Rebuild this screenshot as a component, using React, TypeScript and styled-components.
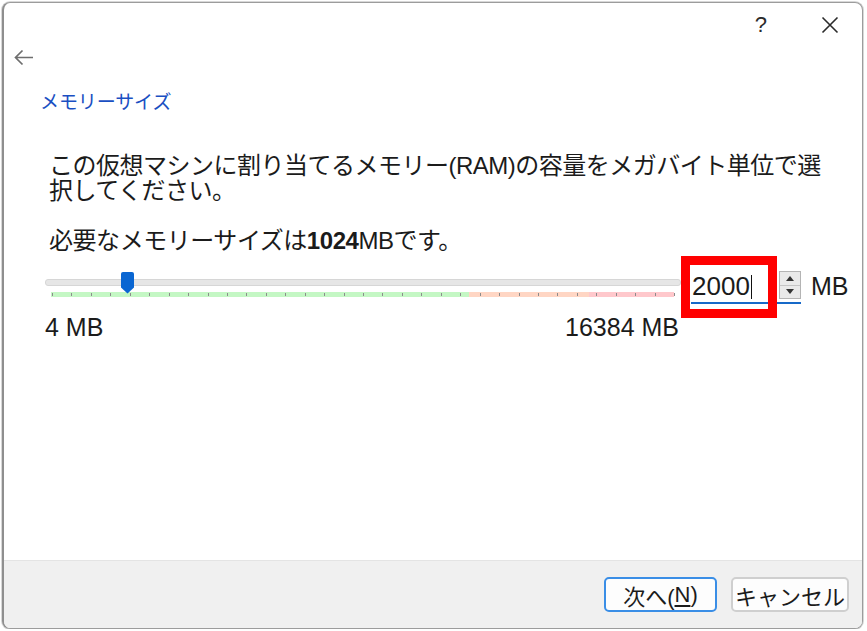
import * as React from 'react';
import styled, { createGlobalStyle } from 'styled-components';

const GlobalStyle = createGlobalStyle`
  html, body {
    margin: 0;
    padding: 0;
    background: #ffffff;
  }
  body {
    font-family: "Liberation Sans", "Noto Sans CJK JP", sans-serif;
    color: #1b1b1b;
  }
`;

const TICK_COUNT = 33;
const MIN = 4;
const MAX = 16384;
const VALUE = 2000;
const TRACK_WIDTH = 636;

export default function App() {
  const handleLeft = 6 + ((VALUE - MIN) / (MAX - MIN)) * (TRACK_WIDTH - 13) - 6;

  return (
    <>
      <GlobalStyle />
      <Dialog>
        <TitleBar>
          <HelpButton>?</HelpButton>
          <CloseButton>
            <svg width='18' height='18' viewBox='0 0 18 18'>
              <path d='M1.5 1.5 L16.5 16.5 M16.5 1.5 L1.5 16.5' stroke='#2b2b2b' strokeWidth='1.6' fill='none' />
            </svg>
          </CloseButton>
        </TitleBar>
        <BackRow>
          <svg width='21' height='17' viewBox='0 0 21 17'>
            <path d='M20 8.5 H2.5 M9.5 1.5 L2.5 8.5 L9.5 15.5' stroke='#6e6e6e' strokeWidth='1.7' fill='none' />
          </svg>
        </BackRow>
        <Body>
          <PageTitle>メモリーサイズ</PageTitle>
          <Description>
            この仮想マシンに割り当てるメモリー(RAM)の容量をメガバイト単位で選<br />
            択してください。
          </Description>
          <Recommended>
            必要なメモリーサイズは<b>1024</b>MBです。
          </Recommended>
          <SliderRow>
            <Slider>
              <Track />
              <Band>
                <Zone $grow={418} $color='#c4f7c4' />
                <Zone $grow={120} $color='#ffd6c4' />
                <Zone $grow={85} $color='#ffc8cc' />
                <Ticks>
                  {Array.from({ length: TICK_COUNT }).map((_, i) => (
                    <Tick key={i} />
                  ))}
                </Ticks>
              </Band>
              <Handle style={{ left: handleLeft }}>
                <svg width='13' height='22' viewBox='0 0 13 22'>
                  <path d='M2 0 H11 Q13 0 13 2 V15.5 L6.5 21.5 L0 15.5 V2 Q0 0 2 0 Z' fill='#0a66d2' />
                </svg>
              </Handle>
            </Slider>
            <SpinField>
              <ValueBox>
                2000<Caret />
              </ValueBox>
              <SpinButton>
                <SpinHalf>
                  <svg width='8' height='5' viewBox='0 0 8 5'><path d='M0 5 L4 0 L8 5 Z' fill='#333' /></svg>
                </SpinHalf>
                <SpinHalf>
                  <svg width='8' height='5' viewBox='0 0 8 5'><path d='M0 0 L4 5 L8 0 Z' fill='#333' /></svg>
                </SpinHalf>
              </SpinButton>
              <Highlight />
            </SpinField>
            <Unit>MB</Unit>
          </SliderRow>
          <RangeLabels>
            <span>4 MB</span>
            <span>16384 MB</span>
          </RangeLabels>
        </Body>
        <Footer>
          <Button $primary>
            次へ(<u>N</u>)
          </Button>
          <Button>キャンセル</Button>
        </Footer>
      </Dialog>
    </>
  );
}

const Dialog = styled.div`
  box-sizing: border-box;
  width: 861px;
  height: 627px;
  margin: 2px 0 0 2px;
  border: 1px solid #9c9c9c;
  border-left: 2px solid #8f8f8f;
  border-radius: 8px;
  background: #ffffff;
  display: flex;
  flex-direction: column;
  overflow: hidden;
  box-shadow: 0 0 0 1px #d8d8d8;
`;

const TitleBar = styled.div`
  height: 44px;
  display: flex;
  align-items: center;
  justify-content: flex-end;
  padding-right: 23px;
  gap: 54px;
`;

const HelpButton = styled.span`
  font-size: 22px;
  color: #2b2b2b;
  line-height: 1;
`;

const CloseButton = styled.span`
  display: flex;
  align-items: center;
`;

const BackRow = styled.div`
  height: 20px;
  display: flex;
  align-items: center;
  padding-left: 9px;
`;

const Body = styled.div`
  flex: 1;
  display: flex;
  flex-direction: column;
`;

const PageTitle = styled.div`
  margin: 24px 0 0 36px;
  font-size: 19px;
  line-height: 24px;
  color: #1a4fc2;
  letter-spacing: -0.1px;
`;

const Description = styled.div`
  margin: 38px 0 0 45px;
  font-size: 24px;
  line-height: 25px;
  white-space: nowrap;
  letter-spacing: -0.5px;
`;

const Recommended = styled.div`
  margin: 25px 0 0 45px;
  font-size: 24px;
  line-height: 25px;
  white-space: nowrap;
  letter-spacing: -0.45px;

  b {
    font-weight: 700;
  }
`;

const SliderRow = styled.div`
  display: flex;
  align-items: flex-start;
  margin-top: 14px;
  padding-left: 41px;
`;

const Slider = styled.div`
  position: relative;
  width: ${TRACK_WIDTH}px;
  margin-top: 5px;
  padding-top: 7px;
`;

const Track = styled.div`
  height: 5px;
  background: #e6e6e6;
  border: 1px solid #d6d6d6;
  border-radius: 3px;
`;

const Band = styled.div`
  position: relative;
  display: flex;
  height: 5px;
  margin: 6px 7px 0 6px;
`;

const Zone = styled.div<{ $grow: number; $color: string }>`
  flex: ${p => p.$grow} 0 0;
  background: ${p => p.$color};
`;

const Ticks = styled.div`
  position: absolute;
  inset: 1px -1px 1px 1px;
  display: flex;
  justify-content: space-between;
`;

const Tick = styled.div`
  width: 1px;
  height: 3px;
  background: #8c8c8c;
`;

const Handle = styled.div`
  position: absolute;
  top: 0;
  display: flex;
`;

const SpinField = styled.div`
  position: relative;
  display: flex;
  align-items: flex-start;
  margin: 4px 0 0 10px;
  border-bottom: 2px solid #1769c8;
`;

const ValueBox = styled.div`
  width: 88px;
  height: 31px;
  display: flex;
  align-items: center;
  font-size: 26px;
  padding-left: 1px;
  box-sizing: border-box;
`;

const Caret = styled.span`
  display: inline-block;
  width: 1.5px;
  height: 24px;
  margin-left: 1px;
  background: #111;
`;

const SpinButton = styled.div`
  width: 22px;
  height: 28px;
  box-sizing: border-box;
  border: 1px solid #b4b4b4;
  background: #e9e9e9;
  display: flex;
  flex-direction: column;
`;

const SpinHalf = styled.div`
  flex: 1;
  display: flex;
  align-items: center;
  justify-content: center;

  & + & {
    border-top: 1px solid #c4c4c4;
  }
`;

const Highlight = styled.div`
  position: absolute;
  left: -10px;
  top: -15px;
  width: 96px;
  height: 62px;
  box-sizing: border-box;
  border: 9px solid #ff0000;
`;

const Unit = styled.div`
  margin: 5px 0 0 10px;
  font-size: 25px;
  line-height: 28px;
`;

const RangeLabels = styled.div`
  width: ${TRACK_WIDTH}px;
  box-sizing: border-box;
  margin: 9px 0 0 41px;
  padding-right: 2px;
  display: flex;
  justify-content: space-between;
  font-size: 25px;
  line-height: 28px;
`;

const Footer = styled.div`
  height: 68px;
  flex-shrink: 0;
  box-sizing: border-box;
  background: #f0f0f0;
  border-top: 1px solid #e4e4e4;
  display: flex;
  justify-content: flex-end;
  align-items: flex-start;
  gap: 14px;
  padding: 16px 13px 0 0;
`;

const Button = styled.div<{ $primary?: boolean }>`
  height: 35px;
  min-width: 113px;
  padding: 0 2px;
  box-sizing: border-box;
  border-radius: 5px;
  border: ${p => (p.$primary ? '2px solid #3a8ee6' : '2px solid #cfcfcf')};
  background: #fdfdfd;
  display: flex;
  align-items: center;
  justify-content: center;
  font-size: 22px;
  color: #1b1b1b;

  u {
    text-decoration-thickness: 2px;
    text-underline-offset: 3px;
  }
`;
